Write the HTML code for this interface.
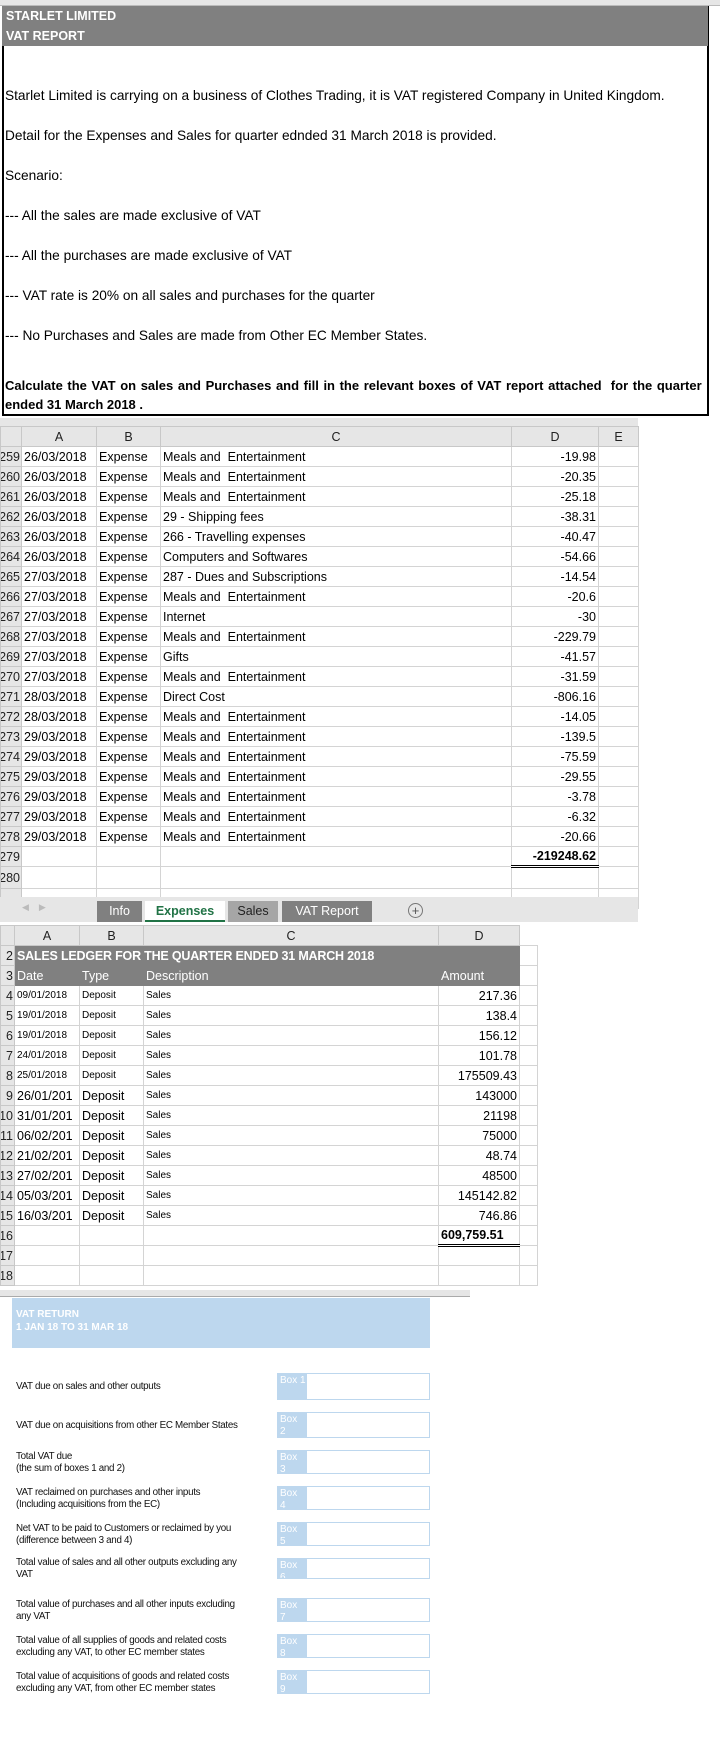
<!DOCTYPE html>
<html><head><meta charset="utf-8"><style>
*{margin:0;padding:0;box-sizing:border-box}
body{width:720px;height:1745px;background:#fff;position:relative;font-family:"Liberation Sans",sans-serif;color:#000;overflow:hidden}
.abs{position:absolute}
.hdr{left:2px;top:6px;width:706px;height:40px;background:#808080;color:#fff;font-weight:bold;font-size:12.5px;padding-left:4px;line-height:20px}
.box{left:2px;top:6px;width:707px;height:410px;border:2px solid #000}
.t{position:absolute;left:5px;font-size:13.7px;white-space:nowrap}
table{border-collapse:collapse;table-layout:fixed;position:absolute}
td{border:1px solid #d4d4d4;height:20px;font-size:12.5px;white-space:nowrap;overflow:hidden;padding:0 2px;line-height:18px}
td.rn{background:#e6e6e6;text-align:right;padding:0 1px;color:#222;border-color:#c8c8c8;direction:rtl}
td.ch{background:#e6e6e6;text-align:center;color:#222;border-color:#c8c8c8}
td.r{text-align:right}
.g td.x{background:#808080;color:#fff;border-color:#808080}
.sm{font-size:10px}
.lab{position:absolute;left:16px;font-size:9.8px;line-height:12px;color:#111;letter-spacing:-0.3px;white-space:nowrap}
.bx{position:absolute;left:277px;width:153px;border:1px solid #bdd7ee;background:#fff}
.bx span{position:absolute;left:0;top:0;bottom:0;width:29px;background:#bdd7ee;color:#fff;font-size:10px;line-height:12px;padding:1px 2px;white-space:nowrap;overflow:hidden}
</style></head><body>
<div class="abs" style="left:0;top:0;width:720px;height:6px;background:#e6e6e6;border-bottom:1px solid #bbb"></div>
<div class="abs box"></div>
<div class="abs hdr">STARLET LIMITED<br>VAT REPORT</div>
<div class="t" style="top:88px">Starlet Limited is carrying on a business of Clothes Trading, it is VAT registered Company in United Kingdom.</div>
<div class="t" style="top:128px">Detail for the Expenses and Sales for quarter ednded 31 March 2018 is provided.</div>
<div class="t" style="top:168px">Scenario:</div>
<div class="t" style="top:208px">--- All the sales are made exclusive of VAT</div>
<div class="t" style="top:248px">--- All the purchases are made exclusive of VAT</div>
<div class="t" style="top:288px">--- VAT rate is 20% on all sales and purchases for the quarter</div>
<div class="t" style="top:328px">--- No Purchases and Sales are made from Other EC Member States.</div>
<div class="t" style="top:378px;font-weight:bold;font-size:13px;word-spacing:1px">Calculate the VAT on sales and Purchases and fill in the relevant boxes of VAT report attached&nbsp; for the quarter</div>
<div class="t" style="top:397px;font-weight:bold;font-size:13px">ended 31 March 2018 .</div>

<div class="abs" style="left:0;top:418px;width:638px;height:8px;background:#e6e6e6"></div>
<table style="left:0;top:426px;width:638px">
<colgroup><col style="width:21px"><col style="width:75px"><col style="width:64px"><col style="width:351px"><col style="width:87px"><col style="width:40px"></colgroup>
<tr><td class="ch"></td><td class="ch">A</td><td class="ch">B</td><td class="ch">C</td><td class="ch">D</td><td class="ch">E</td></tr>
<tr><td class="rn">259</td><td>26/03/2018</td><td>Expense</td><td>Meals and &nbsp;Entertainment</td><td class="r">-19.98</td><td></td></tr>
<tr><td class="rn">260</td><td>26/03/2018</td><td>Expense</td><td>Meals and &nbsp;Entertainment</td><td class="r">-20.35</td><td></td></tr>
<tr><td class="rn">261</td><td>26/03/2018</td><td>Expense</td><td>Meals and &nbsp;Entertainment</td><td class="r">-25.18</td><td></td></tr>
<tr><td class="rn">262</td><td>26/03/2018</td><td>Expense</td><td>29 - Shipping fees</td><td class="r">-38.31</td><td></td></tr>
<tr><td class="rn">263</td><td>26/03/2018</td><td>Expense</td><td>266 - Travelling expenses</td><td class="r">-40.47</td><td></td></tr>
<tr><td class="rn">264</td><td>26/03/2018</td><td>Expense</td><td>Computers and Softwares</td><td class="r">-54.66</td><td></td></tr>
<tr><td class="rn">265</td><td>27/03/2018</td><td>Expense</td><td>287 - Dues and Subscriptions</td><td class="r">-14.54</td><td></td></tr>
<tr><td class="rn">266</td><td>27/03/2018</td><td>Expense</td><td>Meals and &nbsp;Entertainment</td><td class="r">-20.6</td><td></td></tr>
<tr><td class="rn">267</td><td>27/03/2018</td><td>Expense</td><td>Internet</td><td class="r">-30</td><td></td></tr>
<tr><td class="rn">268</td><td>27/03/2018</td><td>Expense</td><td>Meals and &nbsp;Entertainment</td><td class="r">-229.79</td><td></td></tr>
<tr><td class="rn">269</td><td>27/03/2018</td><td>Expense</td><td>Gifts</td><td class="r">-41.57</td><td></td></tr>
<tr><td class="rn">270</td><td>27/03/2018</td><td>Expense</td><td>Meals and &nbsp;Entertainment</td><td class="r">-31.59</td><td></td></tr>
<tr><td class="rn">271</td><td>28/03/2018</td><td>Expense</td><td>Direct Cost</td><td class="r">-806.16</td><td></td></tr>
<tr><td class="rn">272</td><td>28/03/2018</td><td>Expense</td><td>Meals and &nbsp;Entertainment</td><td class="r">-14.05</td><td></td></tr>
<tr><td class="rn">273</td><td>29/03/2018</td><td>Expense</td><td>Meals and &nbsp;Entertainment</td><td class="r">-139.5</td><td></td></tr>
<tr><td class="rn">274</td><td>29/03/2018</td><td>Expense</td><td>Meals and &nbsp;Entertainment</td><td class="r">-75.59</td><td></td></tr>
<tr><td class="rn">275</td><td>29/03/2018</td><td>Expense</td><td>Meals and &nbsp;Entertainment</td><td class="r">-29.55</td><td></td></tr>
<tr><td class="rn">276</td><td>29/03/2018</td><td>Expense</td><td>Meals and &nbsp;Entertainment</td><td class="r">-3.78</td><td></td></tr>
<tr><td class="rn">277</td><td>29/03/2018</td><td>Expense</td><td>Meals and &nbsp;Entertainment</td><td class="r">-6.32</td><td></td></tr>
<tr><td class="rn">278</td><td>29/03/2018</td><td>Expense</td><td>Meals and &nbsp;Entertainment</td><td class="r">-20.66</td><td></td></tr>
<tr><td class="rn">279</td><td></td><td></td><td></td><td class="r" style="font-weight:bold;border-top:1px solid #000;border-bottom:3px double #000">-219248.62</td><td></td></tr>
<tr><td class="rn" style="height:22px">280</td><td></td><td></td><td></td><td></td><td></td></tr>
<tr><td class="rn" style="height:9px"></td><td style="height:9px"></td><td></td><td></td><td></td><td></td></tr>
</table>
<div class="abs" style="left:0;top:897px;width:638px;height:25px;background:#e6e6e6;font-size:12.5px">
<span class="abs" style="left:22px;top:5px;color:#bbb;font-size:9px">◀ &nbsp;&nbsp; ▶</span>
<div class="abs" style="left:97px;top:4px;width:45px;height:21px;background:#808080;color:#fff;text-align:center;line-height:20px">Info</div>
<div class="abs" style="left:145px;top:4px;width:80px;height:21px;background:#fff;color:#217346;font-weight:bold;text-align:center;line-height:20px;border-bottom:2px solid #217346">Expenses</div>
<div class="abs" style="left:228px;top:4px;width:50px;height:21px;background:#a6a6a6;color:#222;text-align:center;line-height:20px">Sales</div>
<div class="abs" style="left:282px;top:4px;width:90px;height:21px;background:#808080;color:#fff;text-align:center;line-height:20px">VAT Report</div>
<div class="abs" style="left:408px;top:6px;width:15px;height:15px;border:1px solid #777;border-radius:50%;text-align:center;line-height:13px;color:#555;font-size:13px">+</div>
</div>

<table style="left:0;top:925px;width:537px">
<colgroup><col style="width:14px"><col style="width:65px"><col style="width:64px"><col style="width:295px"><col style="width:81px"><col style="width:18px"></colgroup>
<tr><td class="ch"></td><td class="ch">A</td><td class="ch">B</td><td class="ch">C</td><td class="ch">D</td><td class="ch" style="background:#fff;border:none"></td></tr>
<tr class="g"><td class="rn">2</td><td class="x" colspan="4" style="font-weight:bold;letter-spacing:-0.2px">SALES LEDGER FOR THE QUARTER ENDED 31 MARCH 2018</td><td></td></tr>
<tr class="g"><td class="rn">3</td><td class="x">Date</td><td class="x">Type</td><td class="x">Description</td><td class="x">Amount</td><td></td></tr>
<tr><td class="rn">4</td><td class="sm">09/01/2018</td><td class="sm">Deposit</td><td class="sm">Sales</td><td class="r">217.36</td><td></td></tr>
<tr><td class="rn">5</td><td class="sm">19/01/2018</td><td class="sm">Deposit</td><td class="sm">Sales</td><td class="r">138.4</td><td></td></tr>
<tr><td class="rn">6</td><td class="sm">19/01/2018</td><td class="sm">Deposit</td><td class="sm">Sales</td><td class="r">156.12</td><td></td></tr>
<tr><td class="rn">7</td><td class="sm">24/01/2018</td><td class="sm">Deposit</td><td class="sm">Sales</td><td class="r">101.78</td><td></td></tr>
<tr><td class="rn">8</td><td class="sm">25/01/2018</td><td class="sm">Deposit</td><td class="sm">Sales</td><td class="r">175509.43</td><td></td></tr>
<tr><td class="rn">9</td><td>26/01/201</td><td>Deposit</td><td class="sm">Sales</td><td class="r">143000</td><td></td></tr>
<tr><td class="rn">10</td><td>31/01/201</td><td>Deposit</td><td class="sm">Sales</td><td class="r">21198</td><td></td></tr>
<tr><td class="rn">11</td><td>06/02/201</td><td>Deposit</td><td class="sm">Sales</td><td class="r">75000</td><td></td></tr>
<tr><td class="rn">12</td><td>21/02/201</td><td>Deposit</td><td class="sm">Sales</td><td class="r">48.74</td><td></td></tr>
<tr><td class="rn">13</td><td>27/02/201</td><td>Deposit</td><td class="sm">Sales</td><td class="r">48500</td><td></td></tr>
<tr><td class="rn">14</td><td>05/03/201</td><td>Deposit</td><td class="sm">Sales</td><td class="r">145142.82</td><td></td></tr>
<tr><td class="rn">15</td><td>16/03/201</td><td>Deposit</td><td class="sm">Sales</td><td class="r">746.86</td><td></td></tr>
<tr><td class="rn">16</td><td></td><td></td><td></td><td style="font-weight:bold;border-top:1px solid #000;border-bottom:3px double #000">609,759.51</td><td></td></tr>
<tr><td class="rn">17</td><td></td><td></td><td></td><td></td><td></td></tr>
<tr><td class="rn">18</td><td></td><td></td><td></td><td></td><td></td></tr>
</table>
<div class="abs" style="left:0;top:1290px;width:470px;height:7px;background:#e6e6e6;border-bottom:1px solid #aaa"></div>

<div class="abs" style="left:12px;top:1298px;width:418px;height:50px;background:#bdd7ee;color:#fff;font-weight:bold;font-size:10px;line-height:13px;padding:10px 0 0 4px">VAT RETURN<br>1 JAN 18 TO 31 MAR 18</div>

<div class="lab" style="top:1381px">VAT due on sales and other outputs</div>
<div class="bx" style="top:1373px;height:27px"><span>Box 1</span></div>
<div class="lab" style="top:1420px">VAT due on acquisitions from other EC Member States</div>
<div class="bx" style="top:1412px;height:26px"><span>Box<br>2</span></div>
<div class="lab" style="top:1451px">Total VAT due<br>(the sum of boxes 1 and 2)</div>
<div class="bx" style="top:1450px;height:24px"><span>Box<br>3</span></div>
<div class="lab" style="top:1487px">VAT reclaimed on purchases and other inputs<br>(Including acquisitions from the EC)</div>
<div class="bx" style="top:1486px;height:24px"><span>Box<br>4</span></div>
<div class="lab" style="top:1523px">Net VAT to be paid to Customers or reclaimed by you<br>(difference between 3 and 4)</div>
<div class="bx" style="top:1522px;height:24px"><span>Box<br>5</span></div>
<div class="lab" style="top:1557px">Total value of sales and all other outputs excluding any<br>VAT</div>
<div class="bx" style="top:1558px;height:21px"><span>Box<br>6</span></div>
<div class="lab" style="top:1599px">Total value of purchases and all other inputs excluding<br>any VAT</div>
<div class="bx" style="top:1598px;height:24px"><span>Box<br>7</span></div>
<div class="lab" style="top:1635px">Total value of all supplies of goods and related costs<br>excluding any VAT, to other EC member states</div>
<div class="bx" style="top:1634px;height:24px"><span>Box<br>8</span></div>
<div class="lab" style="top:1671px">Total value of acquisitions of goods and related costs<br>excluding any VAT, from other EC member states</div>
<div class="bx" style="top:1670px;height:24px"><span>Box<br>9</span></div>
</body></html>
